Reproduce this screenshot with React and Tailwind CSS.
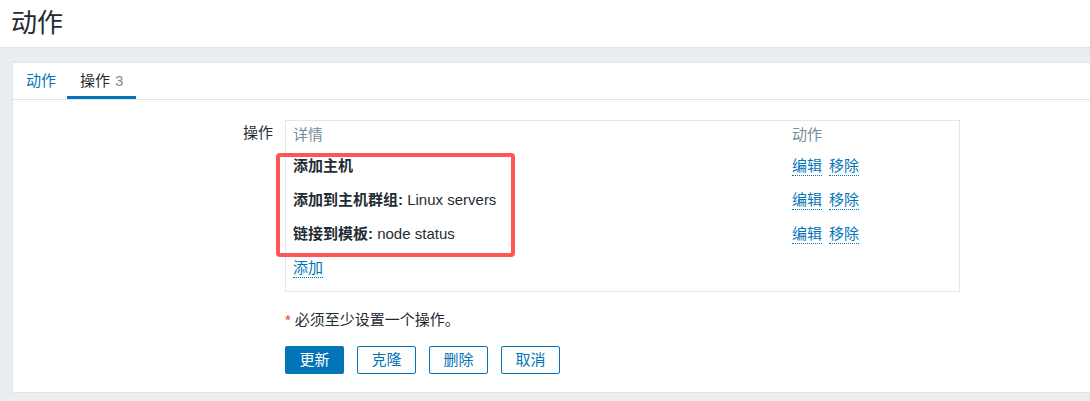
import { useState } from "react";

const operations = [
    { id: 1, label: "添加主机", value: "" },
    { id: 2, label: "添加到主机群组:", value: "Linux servers" },
    { id: 3, label: "链接到模板:", value: "node status" },
];

const linkClass = "text-[#0275b8] border-b border-dotted border-[#0275b8] leading-[18px] cursor-pointer";

const App = () => {
    const [activeTab, setActiveTab] = useState("ops");

    return (
        <div
            className="relative min-h-screen bg-[#ebeef0] text-[15px] text-[#1f2c33]"
            style={{ fontFamily: '"Liberation Sans", "Noto Sans CJK SC", sans-serif' }}
        >
            {/* page header */}
            <header className="h-[48px] bg-white border-b border-[#dfe4e7] pl-[11px] flex items-center">
                <h1 className="text-[26px] leading-none pb-[2px]">动作</h1>
            </header>

            <main className="pt-[14px] pl-[12px]">
                <div className="bg-white border border-r-0 border-[#dfe4e7]">
                    {/* tabs */}
                    <div className="h-[37px] border-b border-[#dfe4e7] flex">
                        <button
                            onClick={() => setActiveTab("action")}
                            className={`pl-[13px] pr-[11px] flex items-center border-b-[3px] pt-[3px] ${
                                activeTab === "action" ? "border-[#0275b8] text-[#1f2c33]" : "border-transparent text-[#0275b8]"
                            }`}
                        >
                            动作
                        </button>
                        <button
                            onClick={() => setActiveTab("ops")}
                            className={`px-[13px] flex items-center border-b-[3px] pt-[3px] ${
                                activeTab === "ops" ? "border-[#0275b8] text-[#1f2c33]" : "border-transparent text-[#0275b8]"
                            }`}
                        >
                            操作<span className="ml-[5px] text-[#768d99]">3</span>
                        </button>
                    </div>

                    {/* form */}
                    <div className="pt-[20px] pb-[18px]">
                        <div className="flex gap-[12px]">
                            <label className="w-[260px] text-right pt-[3px] leading-[20px]">操作</label>
                            <div className="w-[675px] border border-[#e6e6e6] pt-[1px] px-[7px] pb-[6px]">
                                <div className="grid grid-cols-[499px_1fr] h-[27px] items-center text-[#768d99]">
                                    <span>详情</span>
                                    <span>动作</span>
                                </div>
                                {operations.map((op) => (
                                    <div key={op.id} className="grid grid-cols-[499px_1fr] h-[34px] items-center">
                                        <span>
                                            <span className="font-bold">{op.label}</span>
                                            {op.value && <span> {op.value}</span>}
                                        </span>
                                        <span className="flex gap-[7px]">
                                            <a className={linkClass}>编辑</a>
                                            <a className={linkClass}>移除</a>
                                        </span>
                                    </div>
                                ))}
                                <div className="h-[34px] flex items-center">
                                    <a className={linkClass}>添加</a>
                                </div>
                            </div>
                        </div>

                        <div className="ml-[272px] mt-[18px] leading-[20px]">
                            <span className="text-[#e33734] mr-[4px]">*</span>
                            必须至少设置一个操作。
                        </div>

                        <div className="ml-[272px] mt-[16px] flex gap-[13px]">
                            <button className="w-[59px] h-[28px] rounded-[2px] bg-[#0275b8] text-white">更新</button>
                            <button className="w-[59px] h-[28px] rounded-[2px] border border-[#0275b8] text-[#0275b8]">克隆</button>
                            <button className="w-[59px] h-[28px] rounded-[2px] border border-[#0275b8] text-[#0275b8]">删除</button>
                            <button className="w-[59px] h-[28px] rounded-[2px] border border-[#0275b8] text-[#0275b8]">取消</button>
                        </div>
                    </div>
                </div>
            </main>

            {/* highlight frame over the operation rows */}
            <div className="absolute left-[276px] top-[153px] w-[239px] h-[104px] border-4 border-[#ff5558] rounded-[4px] pointer-events-none" />
        </div>
    );
};

export default App;
